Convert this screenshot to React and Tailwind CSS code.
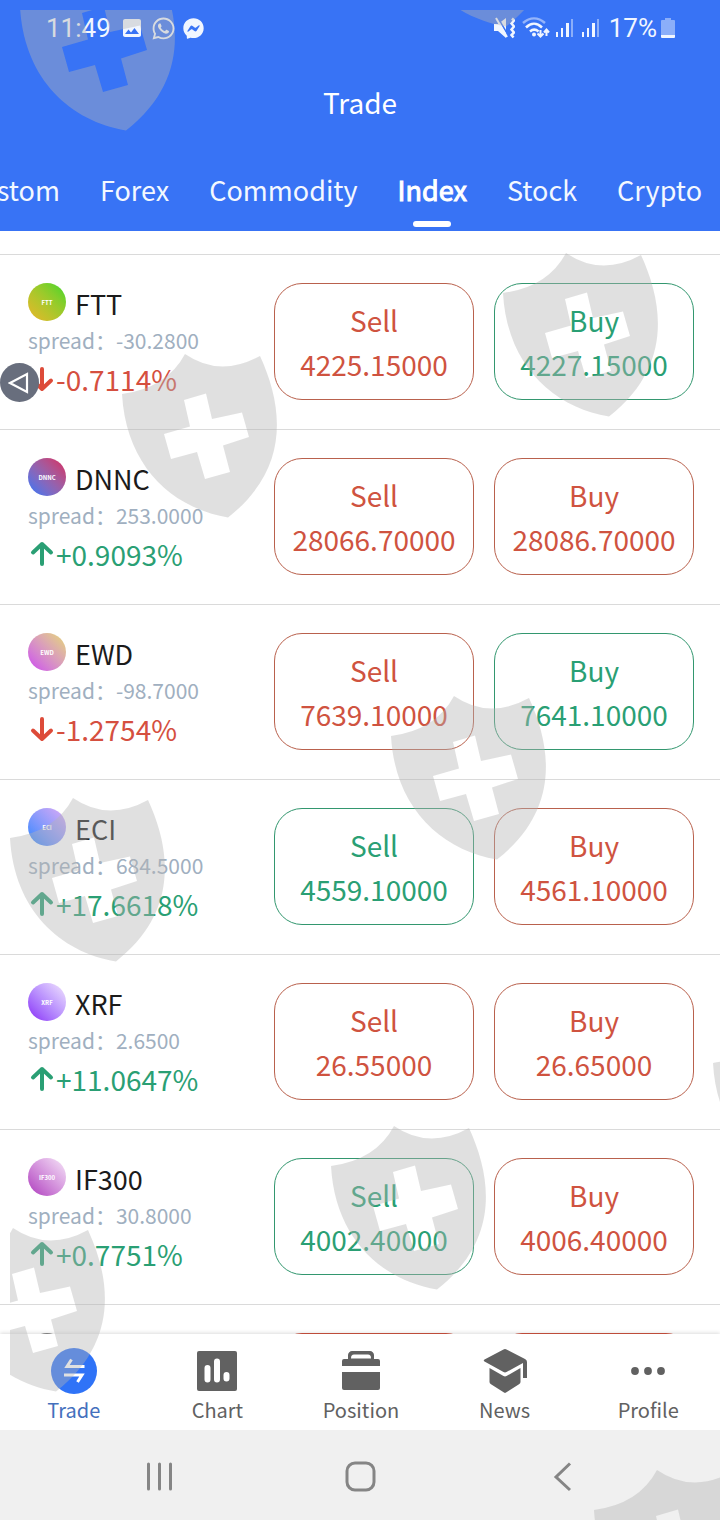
import { FaWhatsapp, FaFacebookMessenger } from 'react-icons/fa';
import { MdImage } from 'react-icons/md';

const tabs = ['Custom', 'Forex', 'Commodity', 'Index', 'Stock', 'Crypto'];

const RED = 'text-[#cf5340] border-[#b9614d]';
const GREEN = 'text-[#2a9f74] border-[#33976f]';

const quotes = [
  { name: 'FTT', spread: '-30.2800', change: '-0.7114%', sell: '4225.15000', buy: '4227.15000', sellColor: RED, buyColor: GREEN, badge: 'from-[#e8b52a] to-[#1fd62b]' },
  { name: 'DNNC', spread: '253.0000', change: '+0.9093%', sell: '28066.70000', buy: '28086.70000', sellColor: RED, buyColor: RED, badge: 'from-[#1274fa] to-[#d8145c]' },
  { name: 'EWD', spread: '-98.7000', change: '-1.2754%', sell: '7639.10000', buy: '7641.10000', sellColor: RED, buyColor: GREEN, badge: 'from-[#cc3df0] to-[#e6d86c]' },
  { name: 'ECI', spread: '684.5000', change: '+17.6618%', sell: '4559.10000', buy: '4561.10000', sellColor: GREEN, buyColor: RED, badge: 'from-[#0a84ff] to-[#dcaaf5]' },
  { name: 'XRF', spread: '2.6500', change: '+11.0647%', sell: '26.55000', buy: '26.65000', sellColor: RED, buyColor: RED, badge: 'from-[#8a10f5] to-[#f3e6fb]' },
  { name: 'IF300', spread: '30.8000', change: '+0.7751%', sell: '4002.40000', buy: '4006.40000', sellColor: GREEN, buyColor: RED, badge: 'from-[#ad35bd] to-[#f6e6f8]' },
];

// top-left corner of every shield
const shields = [
  [20, -33], [400, -137], [503, 253], [122, 354], [391, 696],
  [10, 798], [713, 1023], [331, 1126], [-50, 1228], [594, 1470],
];

function SignalIcon() {
  return (
    <svg width="18" height="20" viewBox="0 0 18 20" fill="currentColor" aria-hidden="true">
      <rect x="0" y="14" width="2" height="5" />
      <rect x="5" y="10" width="2" height="9" />
      <rect x="10" y="5" width="3" height="14" />
      <rect x="15" y="1" width="2" height="18" opacity="0.45" />
    </svg>
  );
}

function StatusBar() {
  return (
    <div className="flex h-[56px] items-center justify-between pr-[45px] pl-[46px] font-['Roboto',sans-serif] text-[26px] text-[#f1f6ff]">
      <div className="flex items-center gap-[7px]">
        <span className="mr-[2px]">11:49</span>
        <MdImage size={24} />
        <FaWhatsapp size={25} />
        <FaFacebookMessenger size={21} />
      </div>
      <div className="flex items-center">
        <svg className="mr-[7px]" width="22" height="22" viewBox="0 0 22 22" fill="none" stroke="currentColor" aria-hidden="true">
          <path d="M1 7h4l8-6v20l-8-7H1z" fill="currentColor" stroke="none" />
          <path d="M5 1l10 17" stroke="#3873f5" strokeWidth="1.500" />
          <path d="M3 1l11 19" strokeWidth="2" />
          <path d="M19 1.500l2 2-2.500 3 2.500 3-2.500 3 2.500 3-2.500 2.500 2 2.500" strokeWidth="2.500" />
        </svg>
        <svg className="mr-[6px]" width="28" height="22" viewBox="0 0 28 22" fill="none" stroke="currentColor" strokeWidth="2.500" aria-hidden="true">
          <path d="M1 6c7-6 15-6 22 0" opacity="0.5" />
          <path d="M4 10.500c5-5 11-5 16 0" />
          <path d="M8 14.500c3-2.600 5.500-2.600 8.500 0" />
          <circle cx="12" cy="17.500" r="2" fill="currentColor" stroke="none" />
          <path d="M18.500 13v6.500M15.500 16.500l3 3 3-3M24.500 19v-6M22 15.500l2.500-3 2.500 3" strokeWidth="2" />
        </svg>
        <span className="mr-[8px]"><SignalIcon /></span>
        <span className="mr-[9px]"><SignalIcon /></span>
        <span className="mr-[4px]">17%</span>
        <svg width="14" height="22" viewBox="0 0 14 22" fill="currentColor" aria-hidden="true">
          <path d="M4 1h6v2h3a1 1 0 0 1 1 1v14H0V4a1 1 0 0 1 1-1h3z" opacity="0.45" />
          <path d="M0 18h14v2a1 1 0 0 1-1 1H1a1 1 0 0 1-1-1z" />
        </svg>
      </div>
    </div>
  );
}

function ChangeArrow({ up }) {
  return (
    <svg
      className={up ? 'text-[#2a9f74]' : 'text-[#dd4b39]'}
      width="28" height="26" viewBox="0 0 28 26" fill="none" stroke="currentColor"
      strokeWidth="4" strokeLinecap="round" strokeLinejoin="round" aria-hidden="true"
    >
      {up ? (
        <path d="M14 23V3M5 11.500L14 3l9 8.500" />
      ) : (
        <path d="M14 3v20M5 14.500L14 23l9-8.500" />
      )}
    </svg>
  );
}

function PriceButton({ label, price, color }) {
  return (
    <button type="button" className={`h-[117px] w-[200px] shrink-0 rounded-[28px] border text-[28px] leading-[44px] ${color}`}>
      <span className="block">{label}</span>
      <span className="block">{price}</span>
    </button>
  );
}

function QuoteRow({ quote }) {
  const up = quote.change.startsWith('+');
  return (
    <li className="flex h-[175px] shrink-0 items-start gap-5 border-t border-[#dadada] pt-[28px] pr-[26px] pl-[28px]">
      <div className="min-w-0 flex-1">
        <div className="flex h-[42px] items-start gap-[9px]">
          <span className={`flex size-[38px] items-center justify-center rounded-full bg-linear-to-tr text-[6px] font-bold text-white ${quote.badge}`}>
            {quote.name}
          </span>
          <span className="text-[27px] leading-[42px] text-[#1b1b1b]">{quote.name}</span>
        </div>
        <p className="text-[21px] leading-[30px] text-[#a0afc0]">spread：{quote.spread}</p>
        <p className={`flex h-[48px] items-center text-[28px] leading-[48px] ${up ? 'text-[#2a9f74]' : 'text-[#d54f3f]'}`}>
          <ChangeArrow up={up} />
          {quote.change}
        </p>
      </div>
      <PriceButton label="Sell" price={quote.sell} color={quote.sellColor} />
      <PriceButton label="Buy" price={quote.buy} color={quote.buyColor} />
    </li>
  );
}

// next row, only its top edge shows above the nav
function LoadingRow() {
  return (
    <li className="flex h-[175px] shrink-0 items-start gap-5 border-t border-[#dadada] pt-[28px] pr-[26px] pl-[28px]">
      <div className="flex-1">
        <div className="size-[38px] rounded-full bg-[#8a8a8a]" />
      </div>
      <div className="h-[117px] w-[200px] rounded-[28px] border border-[#cf5340]" />
      <div className="h-[117px] w-[200px] rounded-[28px] border border-[#cf5340]" />
    </li>
  );
}

const navItems = [
  {
    label: 'Trade',
    icon: (
      <>
        <circle cx="23" cy="23" r="23" fill="#2f73f7" />
        <path d="M20.500 11.500L16 18.500H33.500M13 27H31L26.500 34" fill="none" stroke="#fff" strokeWidth="3" />
      </>
    ),
  },
  {
    label: 'Chart',
    icon: (
      <>
        <rect x="3" y="3" width="40" height="40" rx="2" />
        <path d="M13.500 20v11.500M23 13.500v18M32.500 27v3.500" stroke="#fff" strokeWidth="6" strokeLinecap="round" />
      </>
    ),
  },
  {
    label: 'Position',
    icon: (
      <>
        <path d="M4 18v-5a2 2 0 0 1 2-2h4V7c0-2 2-4 4-4h18c2 0 4 2 4 4v4h4a2 2 0 0 1 2 2v5z" />
        <path d="M13 10.500c0-3 1-4 3-4h14c2 0 3 1 3 4z" fill="#fff" />
        <path d="M4 24h38v16a2 2 0 0 1-2 2H6a2 2 0 0 1-2-2z" />
      </>
    ),
  },
  {
    label: 'News',
    icon: (
      <>
        <path d="M2.500 11.500L21.500 1.500q1.500-.8 3 0L43 11q2 1 2 3V30h-4V15L24.500 24q-1.500.8-3 0L2.500 13.500q-1.500-1 0-2z" />
        <path d="M7.500 20l14 8q1.500.8 3 0L38.500 20v14q0 1.500-1.500 2.300L24 44.500q-1 .8-2 0L9 36.300Q7.500 35.500 7.500 34z" />
      </>
    ),
  },
  {
    label: 'Profile',
    icon: (
      <>
        <circle cx="10" cy="23" r="3.900" />
        <circle cx="23" cy="23" r="3.900" />
        <circle cx="36" cy="23" r="3.900" />
      </>
    ),
  },
];

function BottomNav() {
  return (
    <nav className="relative grid h-[96px] shrink-0 grid-cols-5 bg-white pl-[2px] shadow-[0_-1px_4px_rgba(0,0,0,0.14)]">
      {navItems.map((item, i) => (
        <a key={item.label} href="#" className={`flex flex-col items-center pt-[14px] text-[20px] leading-[32px] ${i === 0 ? 'text-[#4470bd]' : 'text-[#616161]'}`}>
          <svg width="46" height="46" viewBox="0 0 46 46" fill="currentColor" aria-hidden="true">{item.icon}</svg>
          {item.label}
        </a>
      ))}
    </nav>
  );
}

function SystemBar() {
  return (
    <div className="relative grid h-[90px] shrink-0 grid-cols-3 items-center justify-items-center bg-[#f0f0f0] pt-[2px] pr-[57px] pl-[59px] text-[#858585]">
      <button type="button" aria-label="Recent apps">
        <svg width="32" height="32" viewBox="0 0 32 32" stroke="currentColor" strokeWidth="3" strokeLinecap="round">
          <path d="M4.500 4v25M15.500 4v25M26.500 4v25" />
        </svg>
      </button>
      <button type="button" aria-label="Home">
        <svg width="32" height="32" viewBox="0 0 32 32" fill="none" stroke="currentColor" strokeWidth="3">
          <rect x="2" y="3" width="27" height="27" rx="8" />
        </svg>
      </button>
      <button type="button" aria-label="Back">
        <svg width="32" height="32" viewBox="0 0 32 32" fill="none" stroke="currentColor" strokeWidth="3">
          <path d="M24 3.500L10 17l14 13" />
        </svg>
      </button>
    </div>
  );
}

function Watermark() {
  return (
    <svg className="pointer-events-none absolute inset-0 h-full w-full" aria-hidden="true">
      <defs>
        <clipPath id="inset">
          <rect x="10" y="10" width="100%" height="100%" />
        </clipPath>
      </defs>
      <g clipPath="url(#inset)" fill="#b4b4b4" fillOpacity="0.41" fillRule="evenodd">
        {shields.map(([x, y]) => (
          <path
            key={`${x}-${y}`}
            transform={`translate(${x} ${y})`}
            d="M0 40Q45 34 63 0Q98 24 138 2C161 52 169 114 106 163.500C50 154 4 112 0 40ZM62 46L84 39.500L90 65L120 58.500L127 83L101 91.500L108 118L83 125L75 98L49 105L42 80L68 72.500Z"
          />
        ))}
      </g>
    </svg>
  );
}

export default function App() {
  return (
    <div className="relative flex h-screen flex-col overflow-hidden bg-white font-['Noto_Sans_CJK_SC',sans-serif]">
      <header className="shrink-0 bg-[#3873f5] text-white">
        <StatusBar />
        <h1 className="h-[94px] text-center text-[28px] leading-[92px]">Trade</h1>
        <div className="flex h-[81px] justify-end gap-10 overflow-hidden pr-[18px] text-[27px] leading-[63px] text-[#f3f8ff]">
          {tabs.map((tab) => (
            <button key={tab} type="button" className={`flex shrink-0 flex-col items-center pt-[8px] ${tab === 'Index' ? 'text-white [-webkit-text-stroke:1px_white]' : ''}`}>
              {tab}
              {tab === 'Index' && <span className="h-[6px] w-[38px] rounded-full bg-white" />}
            </button>
          ))}
        </div>
      </header>

      <main className="min-h-0 flex-1 overflow-hidden pt-[23px]">
        <ul className="flex flex-col">
          {quotes.map((q) => <QuoteRow key={q.name} quote={q} />)}
          <LoadingRow />
        </ul>
      </main>

      <BottomNav />
      <SystemBar />

      <button type="button" aria-label="Open side panel" className="absolute top-[363px] left-0 flex size-[39px] items-center justify-center rounded-full bg-[#686e7d]">
        <svg width="24" height="24" viewBox="0 0 24 24" fill="none" stroke="#fff" strokeWidth="2.200" aria-hidden="true">
          <path d="M2 12L19 3v18z" />
        </svg>
      </button>
      <Watermark />
    </div>
  );
}
